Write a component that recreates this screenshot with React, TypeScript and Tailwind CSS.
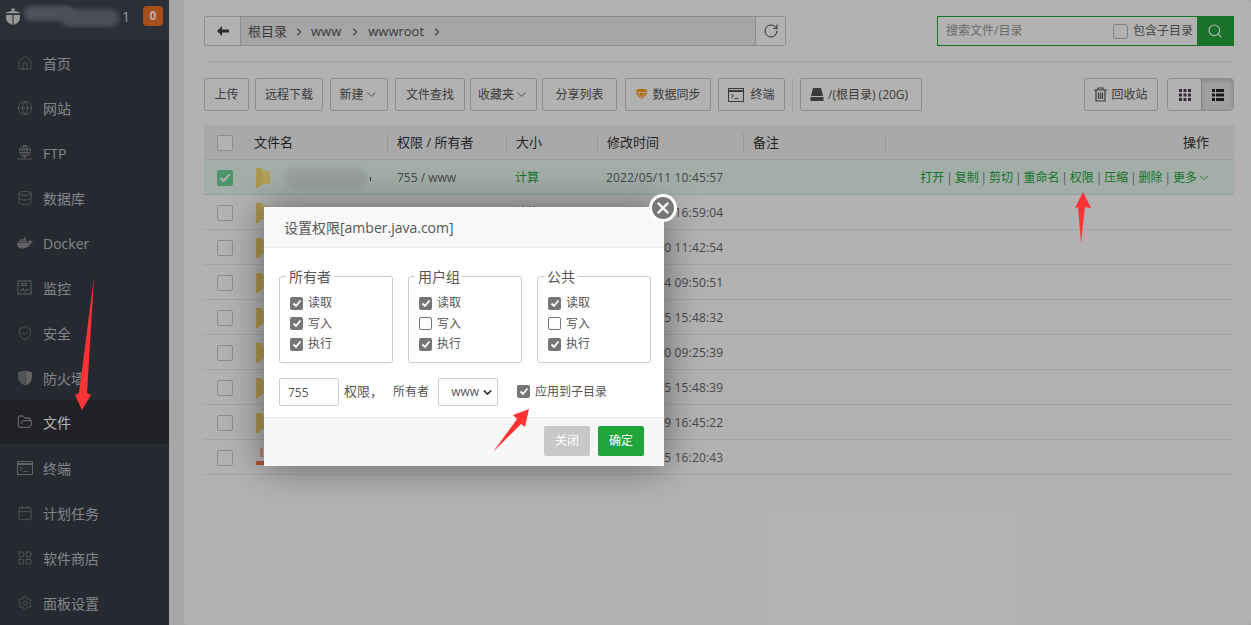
import React from "react";
import {
  Calendar,
  ChevronDown,
  ChevronRight,
  Database,
  FolderOpen,
  Globe,
  House,
  LayoutGrid,
  RotateCw,
  Search,
  Settings,
  ShieldCheck,
} from "lucide-react";
import { FaDocker } from "react-icons/fa";

const font = "font-['Open_Sans','Noto_Sans_CJK_SC',sans-serif]";

const FtpIcon = () => (
  <svg width="16" height="16" viewBox="0 0 16 16" fill="none" stroke="currentColor" strokeWidth="0.8">
    <circle cx="8" cy="6" r="5.5" />
    <ellipse cx="8" cy="6" rx="2.4" ry="5.5" />
    <path d="M2.6 4.500h10.800M2.600 7.500h10.800M8 .5v13M.5 14h15" />
  </svg>
);

const MonitorIcon = () => (
  <svg width="15" height="15" viewBox="0 0 15 15" fill="none" stroke="currentColor" strokeWidth="0.9">
    <rect x="1" y="1" width="13" height="13" />
    <path d="M3 10.500h2l1-2 1.500 3 1.500-2h3M4.500 3.500h5v2h-5z" />
  </svg>
);

const FirewallIcon = () => (
  <svg width="16" height="16" viewBox="0 0 16 16" fill="currentColor">
    <path d="M1 2.500 4 1.500 8 .5v15C4 14 1 11 1 7z" opacity="0.75" />
    <path d="M15 2.500 12 1.500 8.500 .5v15c4-1.500 6.500-4.500 6.500-8.500z" />
  </svg>
);

const TerminalIcon = ({ size = 16 }: { size?: number }) => (
  <svg width={size} height={size} viewBox="0 0 16 14" fill="none" stroke="currentColor" strokeWidth="1">
    <rect x=".5" y=".5" width="15" height="13" />
    <path d="M.5 3h15" strokeWidth="2" />
    <path d="M3 6l2.500 2L3 10M6.500 10.500h4" />
  </svg>
);

const menu: { name: string; icon: React.ReactNode; active?: boolean }[] = [
  { name: "首页", icon: <House size={16} strokeWidth={1} /> },
  { name: "网站", icon: <Globe size={16} strokeWidth={1} /> },
  { name: "FTP", icon: <FtpIcon /> },
  { name: "数据库", icon: <Database size={16} strokeWidth={1} /> },
  { name: "Docker", icon: <FaDocker size={16} /> },
  { name: "监控", icon: <MonitorIcon /> },
  { name: "安全", icon: <ShieldCheck size={16} strokeWidth={1} /> },
  { name: "防火墙", icon: <FirewallIcon /> },
  { name: "文件", icon: <FolderOpen size={16} strokeWidth={1} />, active: true },
  { name: "终端", icon: <TerminalIcon /> },
  { name: "计划任务", icon: <Calendar size={16} strokeWidth={1} /> },
  { name: "软件商店", icon: <LayoutGrid size={16} strokeWidth={1} /> },
  { name: "面板设置", icon: <Settings size={16} strokeWidth={1} /> },
];

const Sidebar = () => (
  <aside className="flex h-full w-[169px] shrink-0 flex-col bg-[#373c46]">
    <div className="flex h-[42px] items-center bg-[#3e444e] pb-[8px] pl-[4px] pr-[6px]">
      <svg width="18" height="19" viewBox="0 0 16 18" className="shrink-0 text-[#dcdcdc]" fill="currentColor">
        <path d="M1 5.500 8 3l7 2.500V6H1zM5.500 2.500 8 1l2.500 1.500L8 3zM1.500 7.500h6V17l-4-2-2-3zM8.500 7.500h6V12l-2 3-4 2z" />
      </svg>
      <div className="relative ml-px h-[24px] w-[99px] shrink-0 overflow-hidden">
        <div className="absolute left-px top-[2px] h-[15px] w-[50px] rounded-full bg-[#6f7580] blur-[2px]" />
        <div className="absolute left-[38px] top-[5px] h-[18px] w-[58px] rounded-full bg-[#6b717c] blur-[2px]" />
      </div>
      <span className="text-[14px] text-[#d8d8d8]">1</span>
      <span className="ml-auto flex h-[20px] w-[20px] items-center justify-center rounded-[4px] bg-[#f0702a] text-[12px] font-bold text-[#fff]">
        0
      </span>
    </div>
    <nav className="flex flex-col">
      {menu.map((item) => (
        <a
          key={item.name}
          className={`flex items-center pl-[17px] text-[14px] ${
            item.active ? "mb-px h-[44px] bg-[#2d3037] text-[#ffffff]" : "h-[45px] text-[#bcc0c4]"
          }`}
        >
          <span className={`flex w-[26px] shrink-0 ${item.active ? "text-[#e6e6e6]" : "text-[#8e8e8e]"}`}>
            {item.icon}
          </span>
          <span className="pt-px">{item.name}</span>
        </a>
      ))}
    </nav>
  </aside>
);

const Btn = ({ children, className = "" }: { children: React.ReactNode; className?: string }) => (
  <button
    className={`flex h-[33px] items-center justify-center rounded-[2px] border border-[#ccc] bg-[#ffffff] text-[12px] text-[#555] ${className}`}
  >
    {children}
  </button>
);

const Toolbar = () => (
  <div className="mt-[16px] flex items-center">
    <Btn className="w-[45px]">上传</Btn>
    <Btn className="ml-[6px] w-[68px]">远程下载</Btn>
    <Btn className="ml-[7px] w-[58px]">
      新建
      <ChevronDown size={15} strokeWidth={1.3} />
    </Btn>
    <Btn className="ml-[7px] w-[70px]">文件查找</Btn>
    <Btn className="ml-[5px] w-[67px]">
      收藏夹
      <ChevronDown size={15} strokeWidth={1.3} />
    </Btn>
    <Btn className="ml-[5px] w-[75px]">分享列表</Btn>
    <Btn className="ml-[8px] w-[86px]">
      <svg width="13" height="11" viewBox="0 0 12 10" className="mr-[4px]">
        <path d="M2.500 0h7L12 3 6 10 0 3z" fill="#ff9a1f" />
        <path d="M0 3h12M3.500 3 6 10l2.500-7" stroke="#fff" strokeWidth="0.7" fill="none" />
      </svg>
      数据同步
    </Btn>
    <Btn className="ml-[7px] w-[67px] gap-[6px]">
      <TerminalIcon size={16} />
      终端
    </Btn>
    <div className="ml-[7px] h-[33px] w-px bg-[#e5e5e5]" />
    <Btn className="ml-[7px] w-[122px] !justify-start gap-[4px] pl-[9px]">
      <svg width="14" height="13" viewBox="0 0 14 13" fill="#555" className="shrink-0">
        <path d="M3 0h8l2 8H1zM.5 9h13v4H.5z" />
      </svg>
      /(根目录) (20G)
    </Btn>
    <Btn className="ml-auto w-[74px] gap-[4px]">
      <svg width="13" height="15" viewBox="0 0 13 15" fill="none" stroke="#555" strokeWidth="1.2">
        <path d="M0 3h13M4 3V1h5v2M2 3v11h9V3M4.500 5.500V12M6.500 5.500V12M8.500 5.500V12" />
      </svg>
      回收站
    </Btn>
    <div className="ml-[9px] flex h-[33px] w-[67px] overflow-hidden rounded-[4px] border border-[#ccc]">
      <div className="flex w-[33px] items-center justify-center bg-[#ffffff] text-[#4d3a52]">
        <svg width="12" height="12" viewBox="0 0 12 12" fill="currentColor">
          <path d="M0 0h3v3H0zM4.500 0h3v3h-3zM9 0h3v3H9zM0 4.500h3v3H0zM4.500 4.500h3v3h-3zM9 4.500h3v3H9zM0 9h3v3H0zM4.500 9h3v3h-3zM9 9h3v3H9z" />
        </svg>
      </div>
      <div className="flex flex-1 items-center justify-center border-l border-[#bbb] bg-[#e6e6e6] text-[#222] shadow-[inset_0_2px_4px_rgba(0,0,0,0.15)]">
        <svg width="12" height="12" viewBox="0 0 12 12" fill="currentColor">
          <path d="M0 0h3v3H0zM4 0h8v3H4zM0 4.500h3v3H0zM4 4.500h8v3H4zM0 9h3v3H0zM4 9h8v3H4z" />
        </svg>
      </div>
    </div>
  </div>
);

const Folder = () => (
  <svg width="15" height="20" viewBox="0 0 15 20" className="ml-px shrink-0">
    <path d="M0 0h6l1 3h7v13H5l-3 4-2-1z" fill="#ffe680" />
    <path d="M0 0h4l2 3v13l-4 4H0z" fill="#f7d872" />
  </svg>
);

const ZipIcon = () => (
  <svg width="16" height="20" viewBox="0 0 16 20" className="ml-px shrink-0">
    <path d="M4 0h3v9H4z" fill="#f8b8a0" />
    <path d="M0 13h16v4H0z" fill="#f47a45" />
  </svg>
);

const Box = ({ on }: { on?: boolean }) => (
  <span
    className={`flex h-[16px] w-[16px] items-center justify-center rounded-[2px] border ${
      on ? "border-[#6fd79a] bg-[#6fd79a]" : "border-[#ccc] bg-[#fff]"
    }`}
  >
    {on && (
      <svg width="12" height="10" viewBox="0 0 12 10" fill="none" stroke="#fff" strokeWidth="2">
        <path d="M1.500 5l3 3 6-6.500" />
      </svg>
    )}
  </span>
);

const rows = [
  "2022/05/11 10:45:57",
  "2022/05/11 16:59:04",
  "2022/04/20 11:42:54",
  "2022/04/14 09:50:51",
  "2022/05/05 15:48:32",
  "2022/04/10 09:25:39",
  "2022/05/05 15:48:39",
  "2022/03/09 16:45:22",
  "2022/05/05 16:20:43",
];

const actions = ["打开", "复制", "剪切", "重命名", "权限", "压缩", "删除"];

const FileTable = () => (
  <div className="mt-[14px] text-[12px]">
    <div className="flex h-[35px] items-center border-b border-[#e3e3e3] bg-[#f2f2f2] pt-[2px] text-[#333]">
      <span className="ml-[13px] mr-[21px]">
        <Box />
      </span>
      <span className="w-[133px] text-[13px]">文件名</span>
      <span className="w-[119px] border-l border-[#ddd] pl-[9px] text-[13px]">权限 / 所有者</span>
      <span className="w-[91px] border-l border-[#ddd] pl-[9px] text-[13px]">大小</span>
      <span className="w-[146px] border-l border-[#ddd] pl-[9px] text-[13px]">修改时间</span>
      <span className="w-[142px] border-l border-[#ddd] pl-[9px] text-[13px]">备注</span>
      <span className="flex-1 border-l border-[#ddd] pr-[25px] text-right text-[13px]">操作</span>
    </div>
    {rows.map((date, i) => (
      <div
        key={date}
        className={`flex h-[35px] items-center border-b pt-[2px] text-[#666] ${
          i === 0 ? "border-[#cfe8da] bg-[#eafaf2]" : "border-[#ececec] bg-[#fff]"
        }`}
      >
        <span className="ml-[13px] mr-[22px]">
          <Box on={i === 0} />
        </span>
        <span className="relative flex w-[133px] items-center">
          {i === 8 ? <ZipIcon /> : <Folder />}
          {i === 0 && (
            <>
              <span className="absolute left-[29px] top-0 h-[20px] w-[84px] rounded-full bg-[#dce6e1] blur-[2px]" />
              <span className="absolute left-[115px] top-[9px] h-[4px] w-px bg-[#555]" />
            </>
          )}
        </span>
        <span className="w-[118px] pl-[9px]">{i === 0 && "755 / www"}</span>
        <span className="w-[91px] pl-[9px] text-[#20a53a]">{i < 2 && "计算"}</span>
        <span className="w-[146px] pl-[9px] tracking-[0.16px]">{date}</span>
        {i === 0 && (
          <span className="flex flex-1 items-center justify-end pr-[23px] text-[#20a53a]">
            {actions.map((a) => (
              <React.Fragment key={a}>
                {a}
                <span className="px-[1.900px] text-[#777]">|</span>
              </React.Fragment>
            ))}
            更多
            <ChevronDown size={14} strokeWidth={1.5} />
          </span>
        )}
      </div>
    ))}
  </div>
);

const Tick = ({ on = true, label }: { on?: boolean; label: string }) => (
  <label className="flex items-center text-[12px] text-[#555]">
    <span
      className={`mr-[5px] flex h-[13px] w-[13px] items-center justify-center rounded-[2px] ${
        on ? "bg-[#767676]" : "border border-[#767676] bg-[#fff]"
      }`}
    >
      {on && (
        <svg width="10" height="9" viewBox="0 0 10 9" fill="none" stroke="#fff" strokeWidth="1.8">
          <path d="M1.500 4.500l2.500 2.500 4.500-5.500" />
        </svg>
      )}
    </span>
    {label}
  </label>
);

const Group = ({ title, write }: { title: string; write: boolean }) => (
  <fieldset className="h-[96px] w-[114px] shrink-0 rounded-[3px] border border-[#ccc] px-[10px]">
    <legend className="-ml-[4px] px-[3px] text-[14px] leading-[19px] text-[#555]">{title}</legend>
    <div className="mt-[9px] flex flex-col gap-[4px] [&>label]:h-[16.500px]">
      <Tick label="读取" />
      <Tick label="写入" on={write} />
      <Tick label="执行" />
    </div>
  </fieldset>
);

const Modal = () => (
  <div className="absolute left-[264px] top-[207px] w-[400px] bg-[#ffffff] shadow-[0_0_35px_rgba(0,0,0,0.45)]">
    <div className="flex h-[41px] items-center border-b border-[#eee] bg-[#f8f8f8] pl-[20px] text-[14px] text-[#555]">
      设置权限[amber.java.com]
    </div>
    <div className="px-[15px] pb-[11px] pt-[19px]">
      <div className="flex gap-[15px]">
        <Group title="所有者" write />
        <Group title="用户组" write={false} />
        <Group title="公共" write={false} />
      </div>
      <div className="mt-[15px] flex h-[28px] items-center text-[12px] text-[#555]">
        <input
          readOnly
          value="755"
          className="h-[28px] w-[60px] rounded-[2px] border border-[#ccc] pl-[8px] text-[12px] text-[#555] outline-none"
        />
        <span className="ml-[5px] text-[13px]">权限，</span>
        <span className="ml-[10px]">所有者</span>
        <span className="ml-[9px] flex h-[28px] w-[60px] items-center justify-end rounded-[2px] border border-[#ccc] pr-[3px] text-[#555]">
          www
          <ChevronDown size={13} strokeWidth={3} className="ml-[2px] text-[#333]" />
        </span>
        <span className="ml-[19px] -mt-px">
          <Tick label="应用到子目录" />
        </span>
      </div>
    </div>
    <div className="flex h-[49px] items-start justify-end gap-[8px] border-t border-[#eee] bg-[#f6f8f8] pr-[20px] pt-[8px]">
      <button className="h-[30px] w-[46px] rounded-[2px] bg-[#c8c8c8] text-[12px] text-[#fff]">关闭</button>
      <button className="h-[30px] w-[46px] rounded-[2px] bg-[#20a53a] text-[12px] text-[#fff]">确定</button>
    </div>
    <span className="absolute right-[-13px] top-[-13px] flex h-[28px] w-[28px] items-center justify-center rounded-full border-[3px] border-[#fff] bg-[#777] text-[#fff]">
      <svg width="14" height="14" viewBox="0 0 14 14" stroke="currentColor" strokeWidth="2.400" strokeLinecap="round">
        <path d="M2.500 2.500l9 9M11.500 2.500l-9 9" />
      </svg>
    </span>
  </div>
);

const App = () => (
  <div className={`relative flex h-screen w-full overflow-hidden bg-[#f0f0f0] ${font}`}>
    <Sidebar />
    <main className="ml-[15px] flex-1 rounded-[4px] bg-[#ffffff] pl-[20px] pr-[17px] pt-[16px]">
      <div className="flex items-start">
        <div className="flex h-[30px] w-[582px] overflow-hidden rounded-[2px] border border-[#ccc] text-[13px] text-[#555]">
          <span className="flex w-[36px] items-center justify-center border-r border-[#ccc] bg-[#fff] text-[#444]">
            <svg width="12" height="10" viewBox="0 0 12 10" fill="currentColor">
              <path d="M0 5l5-5v3.500h7v3H5V10z" />
            </svg>
          </span>
          <div className="flex flex-1 items-center bg-[#ececec] pl-[7px] pt-[2px]">
            根目录
            <ChevronRight size={12} strokeWidth={2.2} className="mx-[6px]" />
            www
            <ChevronRight size={12} strokeWidth={2.2} className="mx-[7.500px]" />
            wwwroot
            <ChevronRight size={12} strokeWidth={2.2} className="mx-[7px]" />
          </div>
          <span className="flex w-[30px] items-center justify-center border-l border-[#ccc] bg-[#fff] text-[#444]">
            <RotateCw size={16} strokeWidth={1.5} />
          </span>
        </div>
        <div className="ml-auto flex h-[30px] w-[297px] items-center border border-[#20a53a] bg-[#fff] pl-[8px] text-[12px] text-[#999]">
          搜索文件/目录
          <span className="ml-auto mr-[5px] h-[15px] w-[15px] rounded-[3px] border border-[#bbb] bg-[#fff]" />
          <span className="text-[#666]">包含子目录</span>
          <span className="ml-[4px] flex h-[30px] w-[36px] items-center justify-center bg-[#20a53a] text-[#fff]">
            <Search size={16} strokeWidth={1.8} />
          </span>
        </div>
      </div>
      <div className="mt-[15px] h-px bg-[#eee]" />
      <Toolbar />
      <FileTable />
    </main>

    <div className="absolute inset-0 bg-black/30" />
    <Modal />

    <svg width="1251" height="625" className="pointer-events-none absolute inset-0" fill="#ff3333">
      <polygon points="94,277 87,393 91,395 82,410 75,395 79,393" />
      <polygon points="1083,192 1091,208 1085,207 1081,243 1078,207 1075,208" />
      <polygon points="529,409 513,415 517,419 493,452 521,424 525,427" />
    </svg>
  </div>
);

export default App;
